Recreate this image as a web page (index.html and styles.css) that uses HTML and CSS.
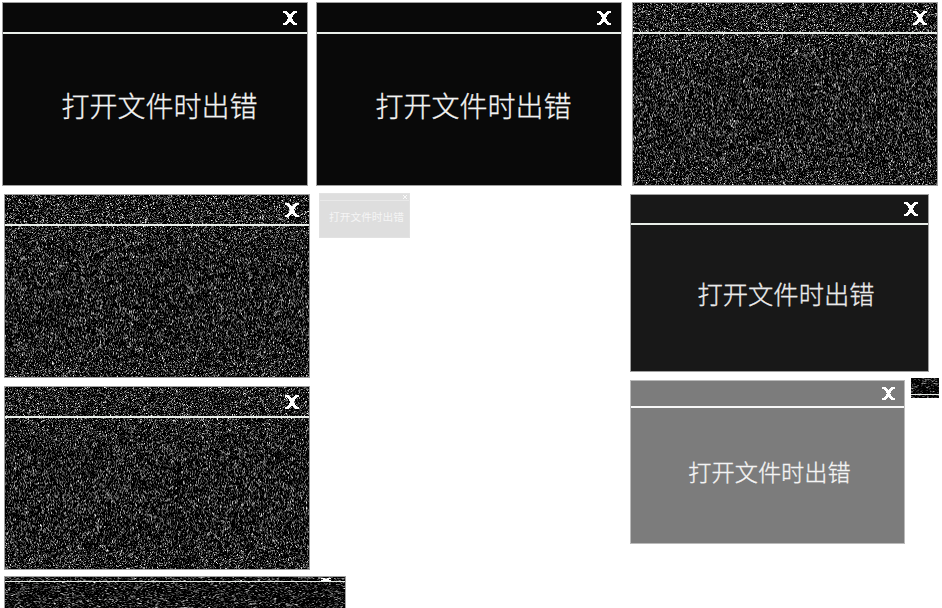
FILE: index.html
```
<!DOCTYPE html>
<html lang="zh-CN">
<head>
<meta charset="utf-8">
<title>打开文件时出错</title>
<link rel="stylesheet" href="styles.css">
</head>
<body>
<svg width="0" height="0" class="defs"><symbol id="close" viewBox="0 0 14 14"><path d="M0 0H4V1H5V2H6V3H8V2H9V1H10V0H14V2H12V3H11V4H10V6H9V8H10V10H11V11H12V12H14V14H10V13H9V12H8V11H6V12H5V13H4V14H0V12H2V11H3V10H4V8H5V6H4V4H3V3H2V2H0Z"/></symbol></svg>
<main class="desktop">
  <div class="column left">
    <section class="window first"><header><svg class="close"><use href="#close"/></svg></header><p>打开文件时出错</p></section>
    <section class="window noisy"><canvas width="304" height="182" data-seed="21"></canvas><header><svg class="close"><use href="#close"/></svg></header></section>
    <section class="window noisy"><canvas width="304" height="182" data-seed="37"></canvas><header><svg class="close"><use href="#close"/></svg></header></section>
    <section class="window noisy strip"><canvas width="340" height="31" data-seed="43" data-wide="1"></canvas><header><svg class="close" viewBox="0 0 10 3"><path d="M0 0H4V1H6V0H10V1H8V2H10V3H0V2H2V1H0Z"/></svg></header></section>
  </div>
  <div class="column middle">
    <section class="window first"><header><svg class="close"><use href="#close"/></svg></header><p>打开文件时出错</p></section>
    <section class="window mini"><header><svg class="close"><use href="#close"/></svg></header><p>打开文件时出错</p></section>
  </div>
  <div class="column right">
    <section class="window noisy"><canvas width="304" height="182" data-seed="59"></canvas><header><svg class="close"><use href="#close"/></svg></header></section>
    <section class="window dark"><header><svg class="close"><use href="#close"/></svg></header><p>打开文件时出错</p></section>
    <div class="row">
      <section class="window gray"><header><svg class="close"><use href="#close"/></svg></header><p>打开文件时出错</p></section>
      <section class="window noisy chip"><canvas width="28" height="20" data-seed="71" data-wide="1"></canvas><header></header></section>
    </div>
  </div>
</main>
<script src="noise.js"></script>
</body>
</html>
```
FILE: noise.js
```
function generator(seed) {
  return function () {
    seed = (seed + 0x6D2B79F5) | 0;
    let t = Math.imul(seed ^ (seed >>> 15), 1 | seed);
    t = (t + Math.imul(t ^ (t >>> 7), 61 | t)) ^ t;
    return ((t ^ (t >>> 14)) >>> 0) / 4294967296;
  };
}

document.querySelectorAll('canvas').forEach(function (canvas) {
  const w = canvas.width, h = canvas.height;
  const random = generator(Number(canvas.dataset.seed));
  const normal = () => Math.sqrt(-2 * Math.log(random() + 1e-9)) * Math.cos(2 * Math.PI * random());
  const field = Array.from({ length: w * (h + 1) }, normal);
  const ctx = canvas.getContext('2d');
  const image = ctx.createImageData(w, h);
  for (let y = 0; y < h; y++) {
    // Grain is sharp at both ends and stretched vertically in the middle.
    const mix = canvas.dataset.wide || y < 30 ? 0 : 0.5 * Math.sin(Math.PI * (y - 30) / (h - 30));
    for (let x = 0; x < w; x++) {
      const i = y * w + x;
      let n = field[i] * (1 - mix) + field[i + w] * mix;
      if (canvas.dataset.wide) n = field[i] * 0.55 + field[i + 1] * 0.4;
      const v = Math.max(0, Math.min(255, 10 + mix * 22 + n * 90));
      image.data.set([v, v, v, 255], i * 4);
    }
  }
  ctx.putImageData(image, 0, 0);
});
```
FILE: styles.css
```
* { box-sizing: border-box; }
body { margin: 0; background: #fff; overflow: hidden; font-family: "Noto Sans CJK SC", sans-serif; }
.defs { display: block; height: 0; }
.desktop { display: flex; width: 942px; height: 608px; overflow: hidden; }
.column { display: flex; flex-direction: column; align-items: flex-start; gap: 8px; padding-top: 2px; flex: none; }
.left { width: 316px; padding-left: 4px; }
.middle { width: 314px; }
.right { width: 312px; }
.window { display: flex; flex-direction: column; flex: none; width: 306px; height: 184px; border: 1px solid #a0a0a0; background: #090909; position: relative; }
.left .first { margin-left: -2px; }
.right > .noisy { margin-left: 2px; }
header { display: flex; flex: none; justify-content: flex-end; align-items: flex-start; height: 31px; padding: 8px 10px 0 0; border-bottom: 2px solid #e9eee9; position: relative; }
.close { display: block; width: 14px; height: 14px; fill: #fff; shape-rendering: crispEdges; }
.window p { flex: 1; margin: 0; display: flex; align-items: center; justify-content: center; padding: 0 0 10px 9px; font-size: 28px; font-weight: 300; line-height: 1; white-space: nowrap; color: #f4f4f4; -webkit-text-stroke: 0.3px #f4f4f4; }
canvas { position: absolute; left: 0; top: 0; display: block; }
.strip { width: 342px; height: 33px; margin-top: -2px; }
.strip header { height: 5px; padding: 1px 14px 0 0; border-bottom-width: 1px; }
.strip .close { width: 10px; height: 3px; }
.mini { width: 91px; height: 45px; margin: -1px 0 0 3px; border-color: #e2e2e2; background: #dedede; }
.mini header { height: 7px; padding: 1px 2px 0 0; border-bottom: 1px solid #e9e9e9; }
.mini .close { width: 4px; height: 4px; fill: #fafafa; }
.mini p { font-size: 10.7px; padding: 0 0 3px 4px; color: #f5f5f5; font-weight: 400; -webkit-text-stroke: 0; }
.dark { width: 299px; height: 178px; background: #181818; }
.dark header { height: 30px; padding-top: 7px; }
.dark p { font-size: 25.3px; padding: 0 0 9px 13px; color: #e8e8e8; }
.row { display: flex; align-items: flex-start; gap: 6px; }
.gray { width: 275px; height: 164px; background: #7c7c7c; border-color: #bababa; }
.gray header { height: 27px; padding: 6px 9px 0 0; border-color: #f7f7f7; }
.gray .close { width: 13px; height: 13px; }
.gray p { font-size: 23.2px; padding: 0 0 8px 4px; }
.chip { width: 28px; height: 20px; margin-top: -2px; border: 0; }
.chip header { height: 17px; padding: 0; border-bottom-width: 1px; }
```
